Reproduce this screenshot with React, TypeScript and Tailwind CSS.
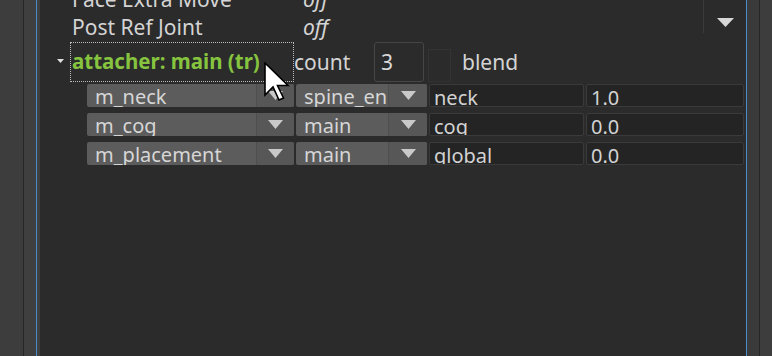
import React from "react";

const Tri = ({ w = 14, h = 8, color = "#c9c9c9" }: { w?: number; h?: number; color?: string }) => (
  <svg width={w} height={h} viewBox={`0 0 ${w} ${h}`}>
    <polygon points={`0,0 ${w},0 ${w / 2},${h}`} fill={color} />
  </svg>
);

const Drop = ({ label, w, arrowW }: { label: string; w: number; arrowW: number }) => (
  <div
    className="flex h-[23px] shrink-0 overflow-hidden rounded-[2px] bg-[#5c5c5c]"
    style={{ width: w }}
  >
    <div className="flex-1 overflow-hidden whitespace-nowrap pl-[8px] text-[20px] leading-[25px] text-[#d6d6d6]">
      {label}
    </div>
    <div
      className="flex shrink-0 items-start justify-center border-l border-[#4e4e4e] bg-[#575757] pt-[7px]"
      style={{ width: arrowW }}
    >
      <Tri w={15} h={9} />
    </div>
  </div>
);

const Field = ({ value, w }: { value: string; w: number }) => (
  <div
    className="h-[23px] shrink-0 overflow-hidden whitespace-nowrap rounded-[2px] border border-[#3a3a3a] bg-[#242424] pl-[4px] text-[20px] leading-[25px] text-[#d2d2d2]"
    style={{ width: w }}
  >
    {value}
  </div>
);

const Row = ({ a, b, c, d }: { a: string; b: string; c: string; d: string }) => (
  <div className="flex h-[29px] items-start pl-[47px]">
    <Drop label={a} w={207} arrowW={38} />
    <div className="w-[2px]" />
    <Drop label={b} w={131} arrowW={39} />
    <div className="w-[2px]" />
    <Field value={c} w={155} />
    <div className="w-[2px]" />
    <Field value={d} w={158} />
  </div>
);

export default function App() {
  return (
    <div
      className="relative flex h-[356px] w-[772px] overflow-hidden bg-[#2a2a2a]"
      style={{ fontFamily: '"Noto Sans", "Open Sans", sans-serif' }}
    >
      {/* left chrome */}
      <div className="h-full w-[23px] shrink-0 bg-[#3d3d3d]" />
      <div className="h-full w-[1px] shrink-0 bg-[#262626]" />
      <div className="h-full w-[12px] shrink-0 bg-[#3f3f3f]" />
      <div className="h-full w-[1px] shrink-0 bg-[#4a8ccc]" />
      <div className="h-full w-[3px] shrink-0 bg-[#3f3f3f]" />

      {/* content */}
      <div className="flex h-full w-[706px] shrink-0 flex-col bg-[#2b2b2b]">
        <div className="-mt-[14px] flex h-[28px] items-start text-[21px] leading-[26px] text-[#d4d4d4]">
          <div className="w-[263px] whitespace-nowrap pl-[32px]">Face Extra Move</div>
          <div className="w-[400px] italic">off</div>
          <div className="h-[28px] w-[1px] bg-[#3a3a3a]" />
        </div>
        <div className="flex h-[28px] items-start text-[21px] leading-[26px] text-[#d4d4d4]">
          <div className="w-[263px] whitespace-nowrap pl-[32px]">Post Ref Joint</div>
          <div className="w-[400px] italic">off</div>
          <div className="h-[19px] w-[1px] bg-[#3a3a3a]" />
          <div className="pl-[13px] pt-[4px]">
            <Tri w={17} h={9} color="#d8d8d8" />
          </div>
        </div>

        <div className="flex h-[42px] items-start">
          <div className="w-[17px] shrink-0" />
          <div className="flex h-[40px] w-[13px] shrink-0 items-center pb-[2px]">
            <Tri w={7} h={4} color="#e0e0e0" />
          </div>
          <div className="h-[40px] w-[224px] shrink-0 whitespace-nowrap border border-dotted border-[#bdbdbd] pl-[1px] text-[20.5px] font-bold leading-[36px] text-[#86c43f]">
            attacher: main (tr)
          </div>
          <div className="w-[80px] shrink-0 text-[21px] leading-[40px] text-[#d4d4d4]">count</div>
          <div className="h-[40px] w-[50px] shrink-0 rounded-[3px] border border-[#464646] pl-[6px] text-[21px] leading-[38px] text-[#d8d8d8]">
            3
          </div>
          <div className="w-[4px]" />
          <div className="mt-[7px] h-[33px] w-[23px] shrink-0 border border-[#333333]" />
          <div className="w-[11px]" />
          <div className="text-[21px] leading-[40px] text-[#d4d4d4]">blend</div>
        </div>

        <Row a="m_neck" b="spine_end" c="neck" d="1.0" />
        <Row a="m_cog" b="main" c="cog" d="0.0" />
        <Row a="m_placement" b="main" c="global" d="0.0" />
      </div>

      {/* right chrome */}
      <div className="h-full w-[1px] shrink-0 bg-[#4a8ccc]" />
      <div className="h-full w-[12px] shrink-0 bg-[#3a3a3a]" />
      <div className="h-full w-[1px] shrink-0 bg-[#262626]" />
      <div className="h-full flex-1 bg-[#3d3d3d]" />

      {/* mouse cursor */}
      <svg
        className="absolute left-[264px] top-[62px]"
        width="26"
        height="40"
        viewBox="-1 -1 26 40"
      >
        <polygon
          points="0,0 0,32 8,24 14,37 18.5,35 12.5,22.5 23,22.5"
          fill="#ffffff"
          stroke="#000000"
          strokeWidth="1.6"
          strokeLinejoin="miter"
        />
      </svg>
    </div>
  );
}
